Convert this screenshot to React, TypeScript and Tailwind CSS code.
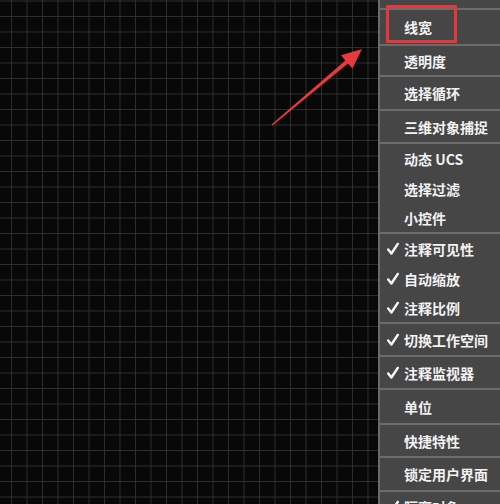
import React from "react";

type Item = { label: string; h: number; check?: boolean };
type Section = Item[];

const sections: Section[] = [
  [{ label: "", h: 8 }],
  [{ label: "线宽", h: 34 }],
  [{ label: "透明度", h: 29 }],
  [{ label: "选择循环", h: 32 }],
  [{ label: "三维对象捕捉", h: 31 }],
  [
    { label: "动态 UCS", h: 30 },
    { label: "选择过滤", h: 29 },
    { label: "小控件", h: 29 },
  ],
  [
    { label: "注释可见性", h: 30, check: true },
    { label: "自动缩放", h: 29, check: true },
    { label: "注释比例", h: 29, check: true },
  ],
  [{ label: "切换工作空间", h: 31, check: true }],
  [{ label: "注释监视器", h: 31, check: true }],
  [{ label: "单位", h: 33 }],
  [{ label: "快捷特性", h: 31 }],
  [{ label: "锁定用户界面", h: 32 }],
  [{ label: "隔离对象", h: 30, check: true }],
];

function Check() {
  return (
    <svg width="12" height="13" viewBox="0 0 12 13" className="shrink-0">
      <path
        d="M1.2 7 L4.4 11 L10.8 1.4"
        fill="none"
        stroke="#f4f4f4"
        strokeWidth="2.5"
        strokeLinecap="round"
        strokeLinejoin="round"
      />
    </svg>
  );
}

export default function App() {
  return (
    <div
      className="relative w-[500px] h-[504px] overflow-hidden flex bg-[#080808]"
      style={{ fontFamily: '"Noto Sans CJK SC", "Noto Sans", sans-serif' }}
    >
      <div className="w-[378px] h-full bg-[#080808] bg-[linear-gradient(to_right,#2e2e2e_1px,transparent_1px),linear-gradient(to_bottom,#2e2e2e_1px,transparent_1px)] bg-size-[15.5px_15.5px] bg-position-[11px_16px]" />
      <div className="flex-1 h-full bg-[#464646] border-l-2 border-[#6a6a6a] flex flex-col">
        {sections.map((sec, si) => (
          <React.Fragment key={si}>
            {si > 0 && <div className="h-[2px] shrink-0 bg-[#6c6c6c]" />}
            {sec.map((it, ii) => (
              <div
                key={ii}
                className="shrink-0 flex items-center relative pl-[24px] text-[14px] font-bold text-[#f2f2f2] leading-none whitespace-nowrap"
                style={{ height: it.h }}
              >
                {it.check && (
                  <span className="absolute left-[7px] top-1/2 -translate-y-1/2 flex">
                    <Check />
                  </span>
                )}
                {it.label}
              </div>
            ))}
          </React.Fragment>
        ))}
      </div>

      <div className="absolute left-[386px] top-[5px] w-[71px] h-[38px] border-[3px] border-[#e5383d] pointer-events-none" />

      <svg
        className="absolute left-0 top-0 pointer-events-none"
        width="500"
        height="504"
        viewBox="0 0 500 504"
      >
        <polygon
          points="271.5,124.4 345.4,60.4 341,55.2 362,49 352.5,68.6 348,63.4 272.5,125.6"
          fill="#e8393c"
        />
      </svg>
    </div>
  );
}
